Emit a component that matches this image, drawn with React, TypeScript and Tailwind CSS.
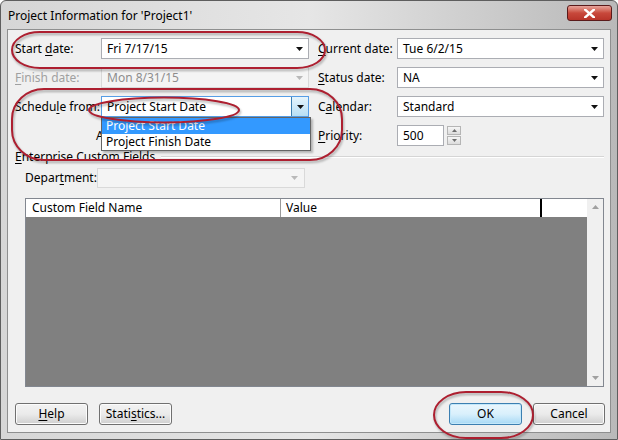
import React from 'react';

const font = "font-['Noto_Sans','Open_Sans',sans-serif]";

const U = ({ children }: { children: React.ReactNode }) => (
  <span className="underline decoration-1 underline-offset-2">{children}</span>
);

const Arrow = ({ disabled }: { disabled?: boolean }) => (
  <svg width="7" height="4" viewBox="0 0 7 4" className="shrink-0">
    <path d="M0 0h7L3.5 4z" fill={disabled ? '#b9b9b9' : '#111'} />
  </svg>
);

const Combo = ({ value, disabled }: { value: string; disabled?: boolean }) => (
  <div
    className={`h-[21px] flex items-center justify-between pl-[5px] pr-[5px] border ${
      disabled ? 'bg-[#f4f4f4] border-[#d9d9d9] text-[#8d8d8d]' : 'bg-white border-[#abadb3] text-black'
    }`}
  >
    <span className="leading-none">{value}</span>
    <Arrow disabled={disabled} />
  </div>
);

const Button = ({ children, primary }: { children: React.ReactNode; primary?: boolean }) => (
  <div
    className={`h-[22px] flex items-center justify-center rounded-[3px] border text-black ${
      primary
        ? 'border-[#3c7fb1] bg-gradient-to-b from-[#eaf6fd] via-[#d9f0fc] to-[#a7d9f5] shadow-[inset_0_0_0_1px_#c4e8fa]'
        : 'border-[#707070] bg-gradient-to-b from-[#f2f2f2] via-[#ebebeb] to-[#cfcfcf] shadow-[inset_0_0_0_1px_#fcfcfc]'
    }`}
  >
    {children}
  </div>
);

export default function App() {
  return (
    <div className={`${font} text-[12px] w-[618px] h-[440px] relative overflow-hidden bg-gradient-to-r from-[#d6d6d6] via-[#e6e6e6] to-[#b9b9b9] border border-[#5e5e5e] rounded-t-[6px]`}>
      {/* title bar */}
      <div className="h-[28px] flex items-start justify-between pl-[7px] pr-[5px]">
        <span className="mt-[7px] text-[12px] leading-[16px] text-black">Project Information for 'Project1'</span>
        <div className="mt-[4px] w-[45px] h-[16px] rounded-[3px] border border-[#5a1a1a] bg-gradient-to-b from-[#e6a39a] via-[#c8483b] to-[#b8342a] flex items-center justify-center">
          <svg width="11" height="9" viewBox="0 0 11 9">
            <path d="M1 0.5l9 8M10 0.5l-9 8" stroke="#fff" strokeWidth="2.4" strokeLinecap="square" />
          </svg>
        </div>
      </div>

      {/* client area */}
      <div className="mx-[6px] h-[404px] border border-[#8e8f8f] bg-[#f0f0f0] pl-[7px] pr-[5px] pt-[8px] flex flex-col text-black">
        <div className="grid grid-cols-[86px_208px_9px_79px_207px] grid-rows-[21px_21px_21px_21px] gap-y-[8px] items-center">
          <span>Start <U>d</U>ate:</span>
          <Combo value="Fri 7/17/15" />
          <span />
          <span><U>C</U>urrent date:</span>
          <Combo value="Tue 6/2/15" />

          <span className="text-[#a0a0a0]"><U>F</U>inish date:</span>
          <Combo value="Mon 8/31/15" disabled />
          <span />
          <span><U>S</U>tatus date:</span>
          <Combo value="NA" />

          <span>Schedu<U>l</U>e from:</span>
          <div className="relative">
            <div className="h-[21px] flex items-center justify-between pl-[5px] border border-[#569de5] bg-white">
              <span className="leading-none">Project Start Date</span>
              <div className="h-[19px] w-[17px] border-l border-[#3c7fb1] bg-gradient-to-b from-[#e5f4fc] to-[#b7dff5] flex items-center justify-center">
                <Arrow />
              </div>
            </div>
            {/* open dropdown list */}
            <div className="absolute left-0 top-[21px] w-[210px] z-10 bg-white border border-[#646464] shadow-[2px_2px_2px_rgba(0,0,0,0.25)]">
              <div className="h-[16px] leading-[16px] pl-[4px] bg-[#3399ff] text-white">Project Start Date</div>
              <div className="h-[16px] leading-[16px] pl-[4px]">Project Finish Date</div>
            </div>
          </div>
          <span />
          <span>C<U>a</U>lendar:</span>
          <Combo value="Standard" />

          <span />
          {/* the rest of this line sits under the open list */}
          <span className="-ml-[5px] justify-self-start leading-none">A</span>
          <span />
          <span><U>P</U>riority:</span>
          <div className="flex items-center gap-[3px]">
            <div className="w-[47px] h-[21px] border border-[#abadb3] bg-white flex items-center pl-[5px]">500</div>
            <div className="flex flex-col gap-[1px]">
              <div className="w-[14px] h-[9px] border border-[#b5b5b5] bg-gradient-to-b from-[#f6f6f6] to-[#dcdcdc] flex items-center justify-center">
                <svg width="5" height="3" viewBox="0 0 5 3"><path d="M0 3h5L2.5 0z" fill="#6d6d6d" /></svg>
              </div>
              <div className="w-[14px] h-[9px] border border-[#b5b5b5] bg-gradient-to-b from-[#f6f6f6] to-[#dcdcdc] flex items-center justify-center">
                <svg width="5" height="3" viewBox="0 0 5 3"><path d="M0 0h5L2.5 3z" fill="#6d6d6d" /></svg>
              </div>
            </div>
          </div>
        </div>

        {/* group header */}
        <div className="mt-[4px] h-[14px] flex items-center gap-[6px] pr-px">
          <span className="leading-none"><U>E</U>nterprise Custom Fields</span>
          <div className="flex-1 h-[2px] border-t border-[#d5d5d5] border-b border-b-white" />
        </div>

        {/* department */}
        <div className="mt-[4px] h-[20px] flex items-center pl-[10px]">
          <span className="w-[72px]">Depar<U>t</U>ment:</span>
          <div className="w-[208px] h-[20px] flex items-center justify-end pr-[6px] border border-[#d9d9d9] bg-[#f4f4f4]">
            <Arrow disabled />
          </div>
        </div>

        {/* custom field grid */}
        <div className="mt-[10px] ml-[10px] mr-px h-[189px] flex border border-[#828790] bg-white">
          <div className="flex-1 flex flex-col">
            <div className="h-[18px] flex items-stretch bg-white">
              <div className="w-[255px] border-r border-[#9a9a9a] flex items-center pl-[6px]">Custom Field Name</div>
              <div className="w-[261px] border-r-2 border-black flex items-center pl-[5px]">Value</div>
              <div className="flex-1" />
            </div>
            <div className="flex-1 bg-[#808080]" />
          </div>
          <div className="w-[16px] bg-[#f0f0f0] flex flex-col justify-between items-center py-[6px]">
            <svg width="7" height="4" viewBox="0 0 7 4"><path d="M0 4h7L3.5 0z" fill="#a0a0a0" /></svg>
            <svg width="7" height="4" viewBox="0 0 7 4"><path d="M0 0h7L3.5 4z" fill="#a0a0a0" /></svg>
          </div>
        </div>

        {/* buttons */}
        <div className="mt-[16px] flex items-center">
          <div className="w-[73px]"><Button><U>H</U>elp</Button></div>
          <div className="w-[73px] ml-[11px]"><Button>Stati<U>s</U>tics...</Button></div>
          <div className="flex-1" />
          <div className="w-[73px]"><Button primary>OK</Button></div>
          <div className="w-[72px] ml-[11px]"><Button>Cancel</Button></div>
        </div>
      </div>

      {/* red annotation marks */}
      <svg
        className="absolute inset-0 pointer-events-none z-20 drop-shadow-[1px_2px_1px_rgba(0,0,0,0.3)]"
        width="618"
        height="440"
        viewBox="0 0 618 440"
        fill="none"
        stroke="#ad1f30"
        strokeWidth="2"
      >
        <rect x="11" y="31" width="313" height="36" rx="28" ry="18" />
        <rect x="11" y="88" width="330" height="71" rx="32" ry="30" />
        <ellipse cx="163" cy="109" rx="75" ry="12.5" />
        <rect x="433" y="391" width="99" height="46" rx="32" ry="23" />
      </svg>
    </div>
  );
}
